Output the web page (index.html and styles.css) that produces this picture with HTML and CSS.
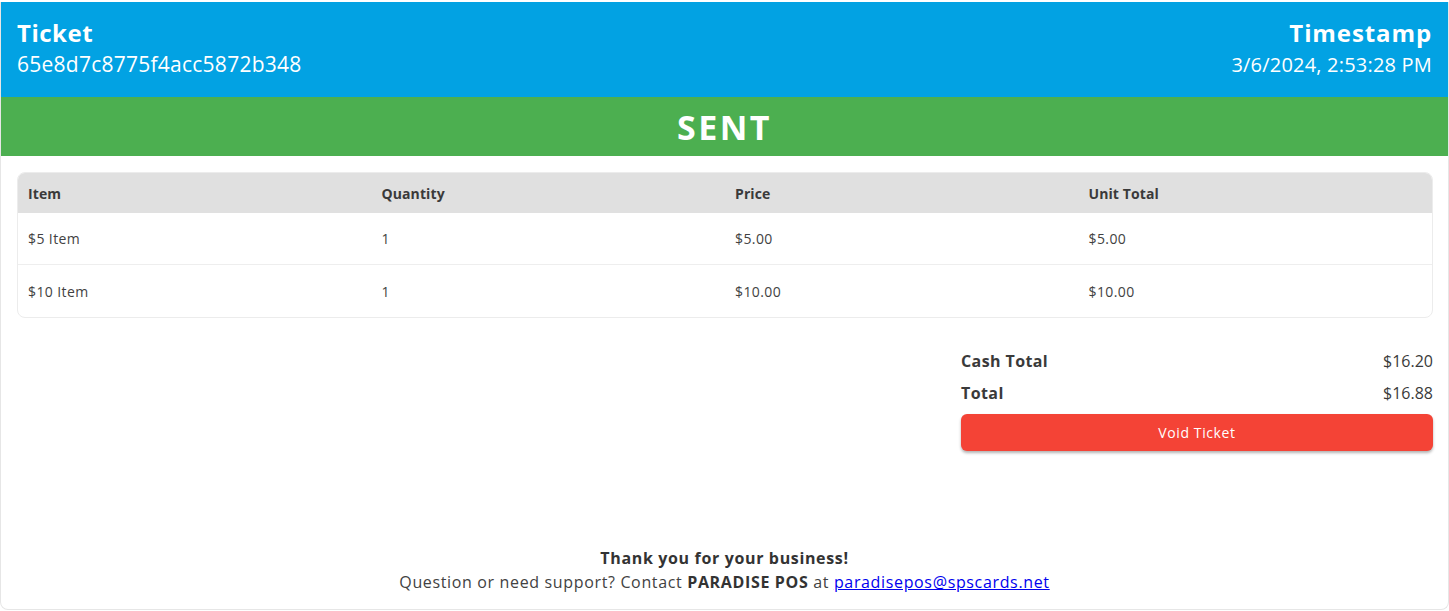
FILE: index.html
```html
<!DOCTYPE html>
<html>
<head>
<meta charset="utf-8">
<link rel="stylesheet" href="styles.css">
</head>
<body>
<div class="card">
  <header class="head">
    <div class="head-col">
      <div class="head-title">Ticket</div>
      <div class="head-value id">65e8d7c8775f4acc5872b348</div>
    </div>
    <div class="head-col right">
      <div class="head-title wide">Timestamp</div>
      <div class="head-value">3/6/2024, 2:53:28 PM</div>
    </div>
  </header>
  <div class="status">SENT</div>
  <main class="content">
    <div class="table">
      <div class="row th">
        <div class="cell">Item</div>
        <div class="cell">Quantity</div>
        <div class="cell">Price</div>
        <div class="cell">Unit Total</div>
      </div>
      <div class="row">
        <div class="cell">$5 Item</div>
        <div class="cell">1</div>
        <div class="cell">$5.00</div>
        <div class="cell">$5.00</div>
      </div>
      <div class="row last">
        <div class="cell">$10 Item</div>
        <div class="cell">1</div>
        <div class="cell">$10.00</div>
        <div class="cell">$10.00</div>
      </div>
    </div>
    <div class="totals-wrap">
      <div class="totals">
        <div class="tline"><span class="tlabel">Cash Total</span><span class="tval">$16.20</span></div>
        <div class="tline"><span class="tlabel">Total</span><span class="tval">$16.88</span></div>
        <button class="void">Void Ticket</button>
      </div>
    </div>
  </main>
  <footer class="foot">
    <div class="thanks">Thank you for your business!</div>
    <div class="support">Question or need support? Contact <b>PARADISE POS</b> at <a href="#">paradisepos@spscards.net</a></div>
  </footer>
</div>
</body>
</html>
```
FILE: styles.css
```css
html, body {
  margin: 0;
  padding: 0;
  background: #fff;
}
body {
  font-family: "Open Sans", "Liberation Sans", sans-serif;
  color: #424242;
  padding-top: 2px;
}
.card {
  border: 1px solid #e6e6e6;
  border-top: none;
  border-radius: 0 0 8px 8px;
  height: 608px;
  box-sizing: border-box;
  display: flex;
  flex-direction: column;
  overflow: hidden;
}
.head {
  background: #02a2e3;
  color: #fff;
  display: flex;
  justify-content: space-between;
  padding: 16px 16px 0 16px;
  height: 95px;
  box-sizing: border-box;
}
.head-col.right { text-align: right; }
.head-title {
  font-size: 24px;
  font-weight: 700;
  line-height: 30px;
  letter-spacing: 0.5px;
}
.head-title.wide { letter-spacing: 0.9px; }
.head-value {
  font-size: 20px;
  line-height: 33px;
  letter-spacing: 0.2px;
}
.head-value.id {
  font-size: 21px;
  letter-spacing: 0.25px;
}
.status {
  background: #4caf50;
  color: #fff;
  font-weight: 700;
  font-size: 34px;
  letter-spacing: 2.5px;
  height: 59px;
  display: flex;
  align-items: center;
  justify-content: center;
}
.content {
  padding: 16px 15px 0 16px;
  flex: 1;
}
.table {
  border: 1px solid #ececec;
  border-radius: 8px;
  overflow: hidden;
}
.row {
  display: grid;
  grid-template-columns: repeat(4, 1fr);
  height: 52px;
  box-sizing: border-box;
  align-items: center;
  border-bottom: 1px solid #eeeeee;
  font-size: 14px;
  letter-spacing: 0.4px;
  color: #424242;
}
.row.last { border-bottom: none; height: 52px; }
.row.th {
  background: #e0e0e0;
  height: 40px;
  font-weight: 700;
  font-size: 14px;
  letter-spacing: 0.1px;
  color: #3a3a3a;
  border-bottom: none;
}
.cell { padding-left: 10px; }
.totals-wrap {
  display: flex;
  justify-content: flex-end;
  padding-top: 27px;
}
.totals {
  width: 472px;
}
.tline {
  display: flex;
  justify-content: space-between;
  font-size: 16px;
  line-height: 32px;
  color: #3a3a3a;
}
.tlabel { font-weight: 700; letter-spacing: 0.4px; }
.void {
  display: block;
  width: 100%;
  height: 37px;
  margin-top: 5px;
  border: none;
  border-radius: 6px;
  background: #f44336;
  color: #fff;
  font-family: inherit;
  font-size: 14px;
  letter-spacing: 0.6px;
  box-shadow: 0 2px 3px rgba(0,0,0,0.3);
}
.foot {
  text-align: center;
  font-size: 16px;
  line-height: 24px;
  letter-spacing: 0.65px;
  padding-bottom: 15px;
  color: #424242;
}
.thanks { font-weight: 700; color: #333; }
.support b { color: #333; }
.support a { color: #0000ee; }
```
